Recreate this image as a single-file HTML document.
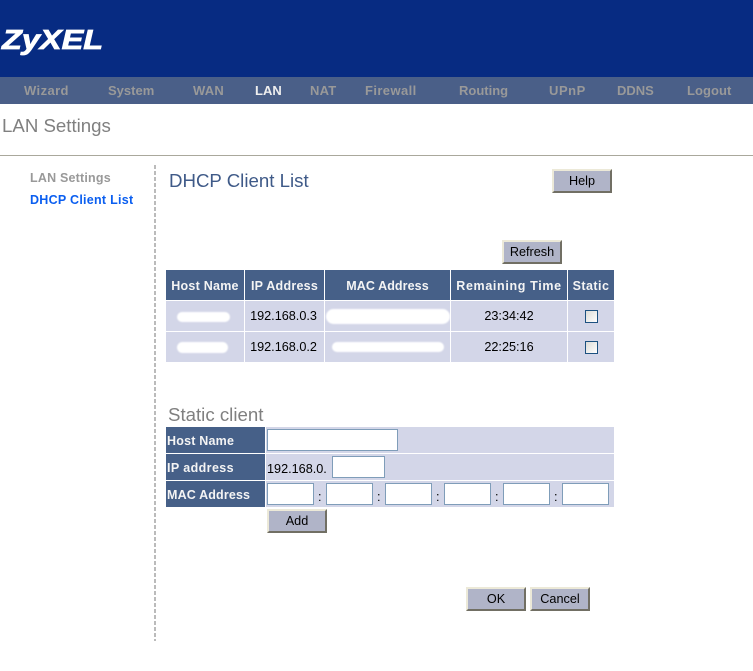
<!DOCTYPE html>
<html>
<head>
<meta charset="utf-8">
<style>
html,body{margin:0;padding:0;background:#fff;}
#p{position:relative;width:753px;height:671px;overflow:hidden;font-family:"Liberation Sans",Arial,sans-serif;background:#fff;}
#p div{position:absolute;box-sizing:border-box;}
.t{white-space:nowrap;line-height:1;}
.nav{top:83px;font-size:13px;font-weight:bold;color:#999;line-height:15px;white-space:nowrap;}
.hd{background:#466088;top:270px;height:30px;color:#f4f4f4;font-size:12.5px;font-weight:bold;line-height:32px;text-align:center;white-space:nowrap;}
.c{background:#d3d6e8;height:30px;color:#000;font-size:12.67px;line-height:30px;text-align:center;white-space:nowrap;}
.lb{background:#466088;left:166px;width:99px;height:26px;color:#f4f4f4;font-size:12.5px;font-weight:bold;line-height:28px;padding-left:1px;white-space:nowrap;}
.r{background:#d3d6e8;left:266px;width:348px;height:26px;}
.in{background:#fff;border:1px solid #7f9db9;height:22px;}
.b{background:#b0b4c8;border:2px solid;border-color:#ece9d8 #716f64 #716f64 #ece9d8;width:60px;height:24px;font-size:12.67px;line-height:21px;text-align:center;color:#000;}
.cb{width:13px;height:13px;left:585px;border:1px solid #1c5180;background:linear-gradient(135deg,#dcdcd7,#fff);}
.w{background:#fff;filter:blur(.8px);border-radius:6px;}
.col{top:490px;font-size:12.67px;line-height:14px;color:#000;}
</style>
</head>
<body>
<div id="p">
<div style="left:0;top:0;width:753px;height:77px;background:#072b82"></div>
<div class="t" style="left:2px;top:24px;font-size:28px;line-height:32px;font-weight:bold;font-style:italic;color:#fff;-webkit-text-stroke:.8px #fff;transform:scaleX(1.16);transform-origin:0 0;">ZyXEL</div>

<div style="left:0;top:77px;width:753px;height:27px;background:#4a5f88"></div>
<div class="nav" style="left:24px;letter-spacing:.4px">Wizard</div>
<div class="nav" style="left:108px">System</div>
<div class="nav" style="left:193px;letter-spacing:.2px">WAN</div>
<div class="nav" style="left:255px;color:#eee">LAN</div>
<div class="nav" style="left:310px;letter-spacing:.2px">NAT</div>
<div class="nav" style="left:365px;letter-spacing:.4px">Firewall</div>
<div class="nav" style="left:459px">Routing</div>
<div class="nav" style="left:549px;letter-spacing:.55px">UPnP</div>
<div class="nav" style="left:617px">DDNS</div>
<div class="nav" style="left:687px;letter-spacing:.05px">Logout</div>

<div class="t" style="left:2px;top:117px;font-size:18.67px;color:#808080">LAN Settings</div>
<div style="left:0;top:155px;width:753px;height:1px;background:#aaa89c"></div>
<div style="left:154px;top:165px;width:2px;height:476px;background:repeating-linear-gradient(to bottom,#bbb 0,#bbb 4px,#fff 4px,#fff 6px)"></div>

<div class="t" style="left:30px;top:172px;font-size:12.5px;font-weight:bold;letter-spacing:.2px;color:#999">LAN Settings</div>
<div class="t" style="left:30px;top:194px;font-size:12.5px;font-weight:bold;letter-spacing:.27px;color:#0a5ef0">DHCP Client List</div>

<div class="t" style="left:169px;top:172px;font-size:18.67px;color:#3f5a88">DHCP Client List</div>
<div class="b" style="left:552px;top:169px;line-height:20px">Help</div>
<div class="b" style="left:502px;top:240px">Refresh</div>

<div class="hd" style="left:166px;width:78px;letter-spacing:.25px">Host Name</div>
<div class="hd" style="left:245px;width:79px;letter-spacing:.25px">IP Address</div>
<div class="hd" style="left:325px;width:125px;letter-spacing:.1px">MAC Address</div>
<div class="hd" style="left:451px;width:116px;letter-spacing:.65px">Remaining Time</div>
<div class="hd" style="left:568px;width:46px;letter-spacing:.45px">Static</div>

<div class="c" style="left:166px;top:301px;width:78px"></div>
<div class="c" style="left:245px;top:301px;width:79px;padding-right:2px">192.168.0.3</div>
<div class="c" style="left:325px;top:301px;width:125px"></div>
<div class="c" style="left:451px;top:301px;width:116px">23:34:42</div>
<div class="c" style="left:568px;top:301px;width:46px"></div>

<div class="c" style="left:166px;top:332px;width:78px"></div>
<div class="c" style="left:245px;top:332px;width:79px;padding-right:2px">192.168.0.2</div>
<div class="c" style="left:325px;top:332px;width:125px"></div>
<div class="c" style="left:451px;top:332px;width:116px">22:25:16</div>
<div class="c" style="left:568px;top:332px;width:46px"></div>

<div class="w" style="left:177px;top:312px;width:53px;height:10px"></div>
<div class="w" style="left:326px;top:309px;width:124px;height:15px;border-radius:8px"></div>
<div class="w" style="left:177px;top:342px;width:51px;height:11px"></div>
<div class="w" style="left:332px;top:342px;width:112px;height:10px"></div>

<div class="cb" style="top:310px"></div>
<div class="cb" style="top:341px"></div>

<div class="t" style="left:168px;top:406px;font-size:18.67px;color:#808080">Static client</div>

<div class="lb" style="top:427px;letter-spacing:.2px">Host Name</div>
<div class="r" style="top:427px"></div>
<div class="lb" style="top:454px;letter-spacing:.4px">IP address</div>
<div class="r" style="top:454px"></div>
<div class="lb" style="top:481px;letter-spacing:.15px">MAC Address</div>
<div class="r" style="top:481px"></div>

<div class="in" style="left:267px;top:429px;width:131px"></div>
<div class="t" style="left:267px;top:463px;font-size:12.67px;color:#000">192.168.0.</div>
<div class="in" style="left:332px;top:456px;width:53px"></div>

<div class="in" style="left:267px;top:483px;width:47px"></div>
<div class="in" style="left:326px;top:483px;width:47px"></div>
<div class="in" style="left:385px;top:483px;width:47px"></div>
<div class="in" style="left:444px;top:483px;width:47px"></div>
<div class="in" style="left:503px;top:483px;width:47px"></div>
<div class="in" style="left:562px;top:483px;width:47px"></div>
<div class="col" style="left:318px">:</div>
<div class="col" style="left:377px">:</div>
<div class="col" style="left:436px">:</div>
<div class="col" style="left:495px">:</div>
<div class="col" style="left:554px">:</div>

<div class="b" style="left:267px;top:509px">Add</div>
<div class="b" style="left:466px;top:587px">OK</div>
<div class="b" style="left:530px;top:587px">Cancel</div>
</div>
</body>
</html>
